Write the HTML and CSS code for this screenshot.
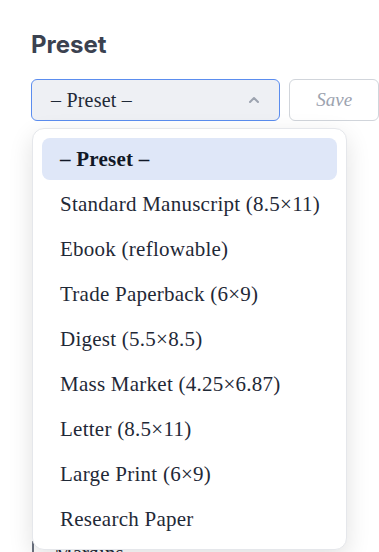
FILE: index.html
```html
<!DOCTYPE html>
<html lang="en">
<head>
    <meta charset="UTF-8">
    <title>Preset</title>
    <link rel="stylesheet" href="styles.css">
</head>
<body>
<div class="panel">
    <h2 class="title">Preset</h2>

    <div class="preset-row">
        <div class="select">
            <span class="select-value">&ndash; Preset &ndash;</span>
            <svg class="caret" width="14" height="14" viewBox="0 0 14 14">
                <path d="M3 9 L7 5 L11 9" fill="none" stroke="#9ca3af" stroke-width="2" stroke-linecap="round" stroke-linejoin="round"/>
            </svg>
        </div>
        <button class="save" disabled>Save</button>

        <ul class="menu">
            <li class="item on">&ndash; Preset &ndash;</li>
            <li class="item">Standard Manuscript (8.5×11)</li>
            <li class="item">Ebook (reflowable)</li>
            <li class="item">Trade Paperback (6×9)</li>
            <li class="item">Digest (5.5×8.5)</li>
            <li class="item">Mass Market (4.25×6.87)</li>
            <li class="item">Letter (8.5×11)</li>
            <li class="item">Large Print (6×9)</li>
            <li class="item">Research Paper</li>
        </ul>
    </div>

    <div class="section">
        <div class="section-label">Margins</div>
    </div>
</div>
</body>
</html>
```

FILE: styles.css
```css
*{
    margin:0;
    padding:0;
    box-sizing:border-box;
}
html,body{
    width:100%;
    height:100%;
    background:#fff;
    overflow:hidden;
}
.panel{
    padding:30px 0 0 31px;
}
.title{
    font-family:Inter,"Noto Sans",sans-serif;
    font-size:24px;
    font-weight:700;
    color:#3b4250;
    line-height:30px;
}
.preset-row{
    position:relative;
    display:flex;
    gap:9px;
    margin-top:19px;
}
.select{
    width:250px;
    height:42px;
    display:flex;
    align-items:center;
    justify-content:space-between;
    padding:0 18px 0 19px;
    border:1px solid #5b8def;
    border-radius:6px;
    background:#eef0f4;
    font-family:"Liberation Serif",serif;
    font-size:20px;
    letter-spacing:.2px;
    color:#1f2937;
}
.caret{
    display:block;
}
.save{
    width:90px;
    height:42px;
    border:1px solid #d1d5db;
    border-radius:6px;
    background:#fff;
    font-family:"Liberation Serif",serif;
    font-style:italic;
    font-size:19px;
    color:#9ca3af;
}
.menu{
    position:absolute;
    top:49px;
    left:1px;
    width:315px;
    height:422px;
    list-style:none;
    padding:9px 9px;
    background:#fff;
    border:1px solid #e5e7eb;
    border-radius:12px;
    box-shadow:0 8px 24px rgba(0,0,0,.12);
    z-index:2;
}
.item{
    height:42px;
    margin-bottom:3px;
    padding-left:18px;
    line-height:42px;
    border-radius:8px;
    font-family:"Liberation Serif",serif;
    font-size:21px;
    letter-spacing:.25px;
    color:#1f2937;
    white-space:nowrap;
}
.item.on{
    background:#dfe7f8;
    font-weight:700;
    color:#111827;
}
.section{
    margin-top:420px;
    margin-left:1px;
    padding-left:20px;
    border-left:2px solid #6b7280;
}
.section-label{
    font-family:"Liberation Serif",serif;
    font-size:21px;
    color:#1f2937;
}
```
